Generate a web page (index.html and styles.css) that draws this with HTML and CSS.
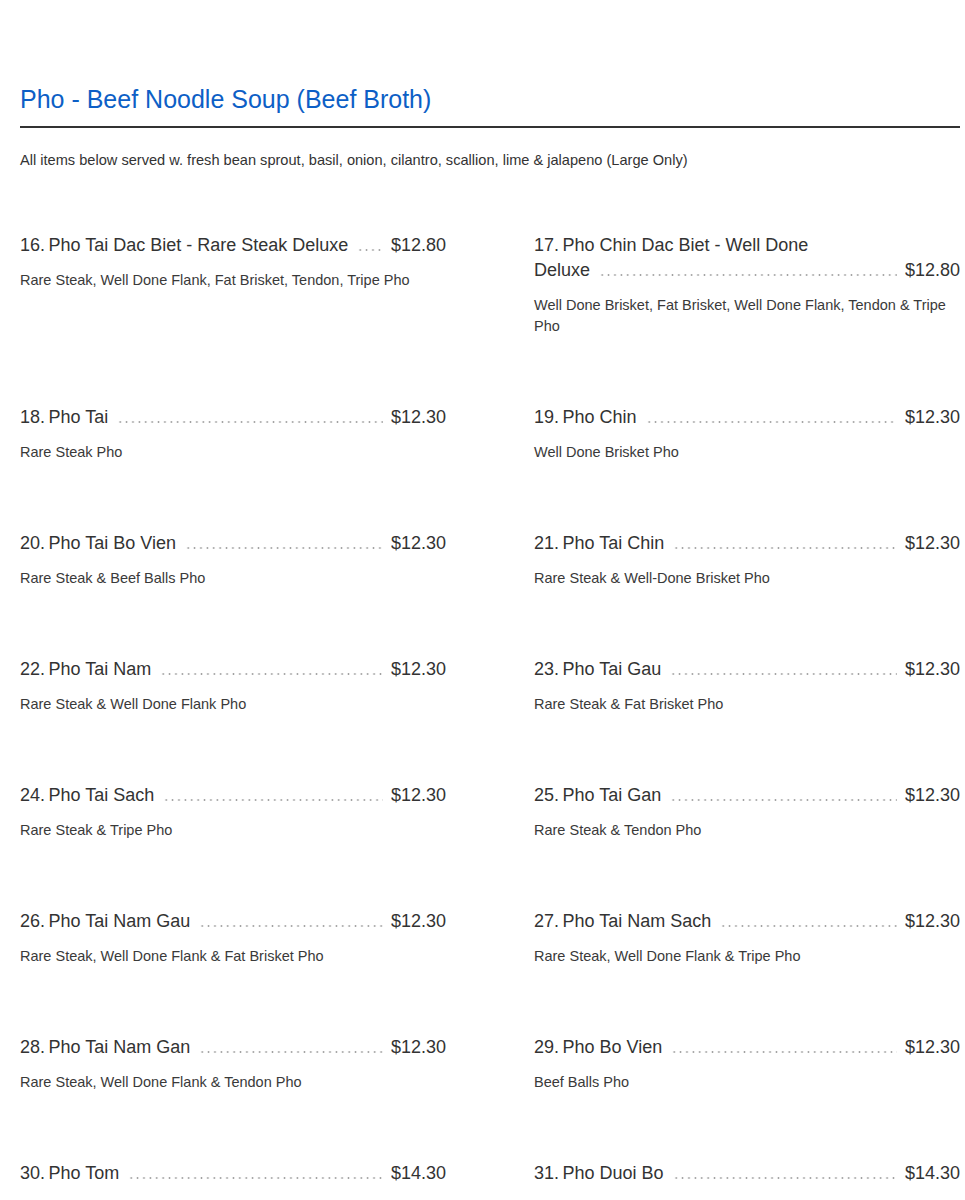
FILE: index.html
```html
<!DOCTYPE html>
<html>
<head>
<meta charset="utf-8">
<link rel="stylesheet" href="styles.css">
</head>
<body>
<div class="page">
  <h1 class="title">Pho - Beef Noodle Soup (Beef Broth)</h1>
  <p class="intro">All items below served w. fresh bean sprout, basil, onion, cilantro, scallion, lime &amp; jalapeno (Large Only)</p>
  <div class="menu">
    <div class="item"><div class="head"><span class="name"><span class="num">16.</span>Pho Tai Dac Biet - Rare Steak Deluxe<span class="dots"></span></span><span class="price">$12.80</span></div><p class="desc">Rare Steak, Well Done Flank, Fat Brisket, Tendon, Tripe Pho</p></div>
    <div class="item"><div class="head"><span class="name"><span class="num">17.</span>Pho Chin Dac Biet - Well Done<br>Deluxe<span class="dots"></span></span><span class="price">$12.80</span></div><p class="desc">Well Done Brisket, Fat Brisket, Well Done Flank, Tendon &amp; Tripe Pho</p></div>
    <div class="item"><div class="head"><span class="name"><span class="num">18.</span>Pho Tai<span class="dots"></span></span><span class="price">$12.30</span></div><p class="desc">Rare Steak Pho</p></div>
    <div class="item"><div class="head"><span class="name"><span class="num">19.</span>Pho Chin<span class="dots"></span></span><span class="price">$12.30</span></div><p class="desc">Well Done Brisket Pho</p></div>
    <div class="item"><div class="head"><span class="name"><span class="num">20.</span>Pho Tai Bo Vien<span class="dots"></span></span><span class="price">$12.30</span></div><p class="desc">Rare Steak &amp; Beef Balls Pho</p></div>
    <div class="item"><div class="head"><span class="name"><span class="num">21.</span>Pho Tai Chin<span class="dots"></span></span><span class="price">$12.30</span></div><p class="desc">Rare Steak &amp; Well-Done Brisket Pho</p></div>
    <div class="item"><div class="head"><span class="name"><span class="num">22.</span>Pho Tai Nam<span class="dots"></span></span><span class="price">$12.30</span></div><p class="desc">Rare Steak &amp; Well Done Flank Pho</p></div>
    <div class="item"><div class="head"><span class="name"><span class="num">23.</span>Pho Tai Gau<span class="dots"></span></span><span class="price">$12.30</span></div><p class="desc">Rare Steak &amp; Fat Brisket Pho</p></div>
    <div class="item"><div class="head"><span class="name"><span class="num">24.</span>Pho Tai Sach<span class="dots"></span></span><span class="price">$12.30</span></div><p class="desc">Rare Steak &amp; Tripe Pho</p></div>
    <div class="item"><div class="head"><span class="name"><span class="num">25.</span>Pho Tai Gan<span class="dots"></span></span><span class="price">$12.30</span></div><p class="desc">Rare Steak &amp; Tendon Pho</p></div>
    <div class="item"><div class="head"><span class="name"><span class="num">26.</span>Pho Tai Nam Gau<span class="dots"></span></span><span class="price">$12.30</span></div><p class="desc">Rare Steak, Well Done Flank &amp; Fat Brisket Pho</p></div>
    <div class="item"><div class="head"><span class="name"><span class="num">27.</span>Pho Tai Nam Sach<span class="dots"></span></span><span class="price">$12.30</span></div><p class="desc">Rare Steak, Well Done Flank &amp; Tripe Pho</p></div>
    <div class="item"><div class="head"><span class="name"><span class="num">28.</span>Pho Tai Nam Gan<span class="dots"></span></span><span class="price">$12.30</span></div><p class="desc">Rare Steak, Well Done Flank &amp; Tendon Pho</p></div>
    <div class="item"><div class="head"><span class="name"><span class="num">29.</span>Pho Bo Vien<span class="dots"></span></span><span class="price">$12.30</span></div><p class="desc">Beef Balls Pho</p></div>
    <div class="item"><div class="head"><span class="name"><span class="num">30.</span>Pho Tom<span class="dots"></span></span><span class="price">$14.30</span></div></div>
    <div class="item"><div class="head"><span class="name"><span class="num">31.</span>Pho Duoi Bo<span class="dots"></span></span><span class="price">$14.30</span></div></div>
  </div>
</div>
</body>
</html>
```

FILE: styles.css
```css
html, body {
  margin: 0;
  padding: 0;
  background: #ffffff;
}
body {
  font-family: "Liberation Sans", Arial, sans-serif;
  color: #333333;
}
.page {
  width: 940px;
  padding: 84px 5px 40px 20px;
}
.title {
  margin: 0;
  font-size: 25px;
  line-height: 30px;
  font-weight: normal;
  color: #0d5fc6;
  padding-bottom: 12px;
  border-bottom: 2px solid #333333;
}
.intro {
  margin: 22px 0 0 0;
  font-size: 14.6px;
  line-height: 20px;
  color: #333333;
}
.menu {
  margin-top: 63px;
  display: grid;
  grid-template-columns: 426px 426px;
  column-gap: 88px;
  row-gap: 68px;
  align-items: start;
}
.head {
  display: flex;
  align-items: flex-end;
  font-size: 18px;
  line-height: 25px;
  color: #333333;
}
.name {
  flex: 1 1 auto;
  min-width: 0;
  overflow: hidden;
}
.num {
  margin-right: 3.5px;
}
.dots {
  display: inline-block;
  width: 600px;
  height: 2px;
  margin-left: 9px;
  margin-right: -609px;
  vertical-align: baseline;
  background-image: radial-gradient(circle at 50% 50%, #a0a0a0 0.75px, rgba(255,255,255,0) 1.15px);
  background-size: 6.4px 2px;
  background-repeat: repeat-x;
}
.price {
  flex: none;
  padding-left: 8px;
}
.desc {
  margin: 12px 0 0 0;
  font-size: 14.5px;
  line-height: 21px;
  color: #3a3a3a;
}
```
